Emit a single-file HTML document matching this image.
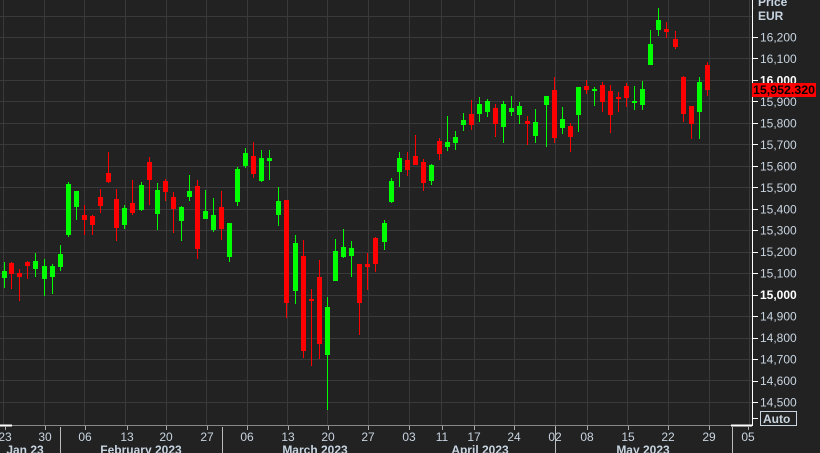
<!DOCTYPE html>
<html><head><meta charset="utf-8"><style>
html,body{margin:0;padding:0;background:#222;}
svg{display:block;font-family:"Liberation Sans",sans-serif;}
</style></head><body>
<svg width="820" height="453" viewBox="0 0 820 453" xmlns="http://www.w3.org/2000/svg">
<rect width="820" height="453" fill="#222"/>
<g id="grid" stroke="#3a3a3a" stroke-width="1"></g>
<g id="candles"></g>
<line x1="752.5" y1="0" x2="752.5" y2="426" stroke="#fff"/>
<line x1="0" y1="425.5" x2="752" y2="425.5" stroke="#888"/>
<line x1="0" y1="425.5" x2="12" y2="425.5" stroke="#fff" stroke-width="2"/>
<line x1="731" y1="425.5" x2="752" y2="425.5" stroke="#fff" stroke-width="2"/>
<g id="yaxis" font-size="12" fill="#c8d4e0"></g>
<g id="xaxis" font-size="12" fill="#c8d4e0"></g>
<text x="758" y="6" font-size="12" font-weight="bold" fill="#c8d4e0">Price</text>
<text x="758" y="20" font-size="12" font-weight="bold" fill="#c8d4e0">EUR</text>
<rect x="752" y="83" width="64" height="14" fill="#f00"/>
<text x="753" y="94" font-size="12" font-weight="bold" fill="#000" textLength="62" lengthAdjust="spacingAndGlyphs">15,952.320</text>
<rect x="760.5" y="411.5" width="36" height="14" fill="none" stroke="#c8d4e0"/>
<text x="763" y="423" font-size="12" font-weight="bold" fill="#c8d4e0">Auto</text>
<line x1="752" y1="418.5" x2="758" y2="418.5" stroke="#fff"/>
</svg>
<script>
var ns="http://www.w3.org/2000/svg";
function el(p,t,a,txt){var e=document.createElementNS(ns,t);for(var k in a)e.setAttribute(k,a[k]);if(txt)e.textContent=txt;p.appendChild(e);return e;}
var g=document.getElementById('grid');
for(var i=0;i<19;i++){var y=Math.round(15.5+21.47*i)+0.5;el(g,'line',{x1:0,y1:y,x2:752,y2:y});}
var vx=[3,44,84,125,166,206,247,287,327,368,409,441,474,514,555,587,627,668,709,749];
vx.forEach(function(x){el(g,'line',{x1:x+.5,y1:0,x2:x+.5,y2:425});});
var ya=document.getElementById('yaxis');
for(var i=0;i<18;i++){var p=16200-100*i;var y=37+21.47*i;var s=p.toString().replace(/(\d)(\d{3})$/,'$1,$2');
var b=(p%1000===0);el(ya,'line',{x1:752,y1:Math.round(y)+.5,x2:758,y2:Math.round(y)+.5,stroke:'#fff'});
el(ya,'text',{x:760,y:y+4.5,'font-weight':b?'bold':'normal',fill:b?'#fff':'#c8d4e0'},s);}
var xa=document.getElementById('xaxis');
var lb=[["23",5],["30",45],["06",85],["13",127],["20",166],["27",207],["06",247],["13",288],["20",328],["27",368],["03",409],["11",442],["17",474],["24",514],["02",555],["08",587],["15",628],["22",668],["29",709],["05",748]];
lb.forEach(function(l){el(xa,'text',{x:l[1],y:441,'text-anchor':'middle'},l[0]);el(xa,'line',{x1:l[1]+.5,y1:426,x2:l[1]+.5,y2:430,stroke:'#aaa'});});
[60,222,555,732].forEach(function(x){el(xa,'line',{x1:x+.5,y1:427,x2:x+.5,y2:453,stroke:'#bbb'});});
[["Jan 23",25],["February 2023",141],["March 2023",315],["April 2023",480],["May 2023",643]].forEach(function(m){el(xa,'text',{x:m[1],y:454,'text-anchor':'middle','font-weight':'bold'},m[0]);});
var C=[
[3.5,262,288,271,278,'g'],[11,262,289,263,274,'r'],[19,269,301,273,277,'r'],[27,261,279,262,266,'r'],[35,253,277,261,269,'g'],[44,259,296,266,279,'g'],[52,264,294,266,277,'g'],[60,245,271,254,267,'g'],[68,182,237,184,235,'g'],[76,191,220,191,207,'g'],[84,205,235,215,220,'r'],[92,215,235,216,225,'r'],[100,189,213,197,206,'r'],[108,152,183,173,182,'r'],[116,189,241,199,228,'r'],[124,205,229,208,225,'g'],[132,180,215,203,213,'r'],[141,182,211,185,210,'g'],[149,157,205,162,180,'r'],[157,183,230,190,214,'g'],[165,179,201,181,192,'r'],[173,192,233,197,209,'r'],[181,206,241,207,221,'g'],[189,175,201,191,197,'g'],[197,180,259,186,249,'r'],[205,190,219,211,219,'g'],[213,198,232,215,230,'g'],[221,191,240,207,229,'r'],[229,223,262,223,257,'g'],[237,167,206,169,202,'g'],[245,148,168,153,166,'g'],[253,142,178,156,174,'r'],[261,150,182,158,181,'g'],[269,150,180,158,161,'g'],[278,187,226,201,215,'g'],
[286,200,318,200,303,'r'],[295,235,304,243,291,'g'],[303,240,358,256,351,'r'],[311,289,366,299,301,'r'],[319,260,359,277,344,'r'],[327,297,410,307,355,'g'],[335,239,281,251,281,'g'],[343,229,258,247,257,'g'],[351,241,277,248,256,'g'],[359,264,335,264,303,'r'],[367,253,290,264,267,'r'],[375,237,272,238,264,'r'],[384,220,250,223,242,'g'],[391,178,203,181,202,'g'],[399,152,187,158,172,'g'],[407,152,176,160,170,'r'],[415,135,165,156,165,'r'],[423,159,191,162,183,'r'],[431,164,185,165,181,'g'],[439,138,160,141,154,'r'],[447,116,151,142,147,'g'],[455,131,150,137,143,'g'],[463,113,131,120,125,'g'],[471,100,130,114,125,'r'],[479,97,122,104,114,'g'],[487,99,117,101,112,'g'],[495,104,137,108,124,'r'],[503,101,143,104,127,'g'],[511,96,116,108,112,'g'],[519,102,124,106,115,'g'],[527,116,145,121,124,'r'],[535,109,143,122,136,'g'],
[546,96,147,96,105,'g'],[554,77,143,90,138,'r'],[562,107,134,119,128,'g'],[570,123,152,126,137,'r'],[578,87,132,87,115,'g'],[586,80,94,86,90,'r'],[594,87,106,89,91,'g'],[602,82,112,85,102,'r'],[610,85,133,91,115,'r'],[618,92,112,97,99,'r'],[626,83,107,86,98,'r'],[634,86,110,101,103,'g'],[642,81,110,89,105,'g'],[650,30,65,44,65,'g'],[658,8,36,20,30,'g'],[666,22,38,29,32,'r'],[675,31,49,39,47,'r'],[683,76,122,77,114,'r'],[691,106,139,106,124,'r'],[699,77,139,82,112,'g'],[707,62,96,65,90,'r']];
var cg=document.getElementById('candles');
C.forEach(function(c){var col=c[5]=='g'?'#00ff00':'#ff0000';var x=Math.round(c[0]);
el(cg,'rect',{x:x,y:c[1],width:1,height:c[2]-c[1],fill:col});
el(cg,'rect',{x:x-2,y:c[3],width:5,height:Math.max(2,c[4]-c[3]),fill:col});});
</script>
</body></html>
